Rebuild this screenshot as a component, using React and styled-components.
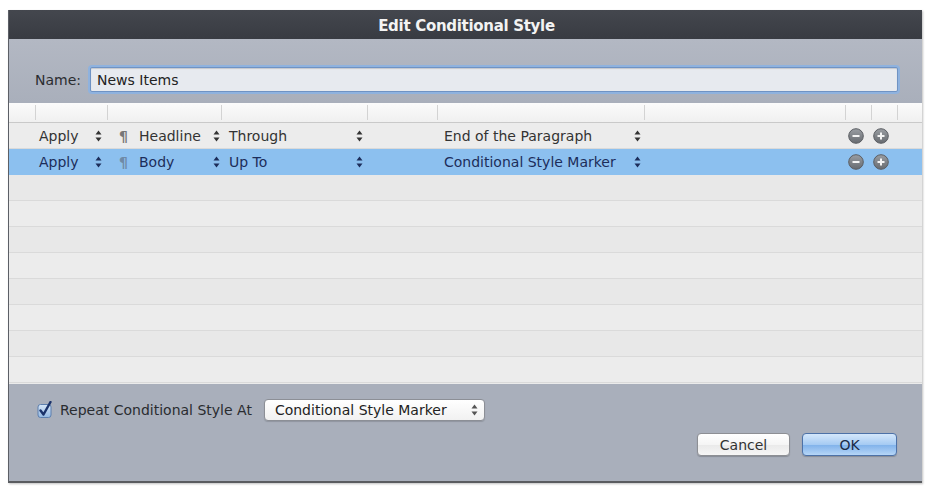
import React from "react";
import styled, { createGlobalStyle } from "styled-components";

const GlobalStyle = createGlobalStyle`
  html, body { margin: 0; padding: 0; background: #ffffff; }
  body { font-family: "DejaVu Sans", "Liberation Sans", sans-serif; }
  * { box-sizing: border-box; }
`;

const COLS = "27px 72px 114px 146px 70px 207px 201px 26px 26px 25px";

const Page = styled.div`
  padding: 10px 0 0 8px;
  width: 929px;
  height: 487px;
`;

const Dialog = styled.div`
  width: 914px;
  height: 473px;
  display: flex;
  flex-direction: column;
  background: #aab0bc;
  border-left: 1px solid #5c5f66;
  border-bottom: 2px solid #5a5c60;
  box-shadow: 1px 1px 2px rgba(0, 0, 0, 0.25);
`;

const TitleBar = styled.div`
  height: 29px;
  flex: none;
  background: linear-gradient(#44474e, #383b42);
  color: #f3f3f3;
  font-family: "DejaVu Sans", sans-serif;
  font-weight: bold;
  font-size: 15px;
  letter-spacing: -0.3px;
  display: flex;
  align-items: center;
  justify-content: center;
  padding: 3px 0 0 2px;
`;

const NameRow = styled.div`
  height: 64px;
  flex: none;
  display: flex;
  align-items: center;
  padding: 27px 0 10px 26px;
  gap: 9px;
  background: linear-gradient(#b3b8c3, #a9afbb);
`;

const Label = styled.span`
  font-size: 14px;
  color: #2a2c30;
  width: 46px;
`;

const NameInput = styled.div`
  width: 808px;
  height: 25px;
  background: #e7eaef;
  border: 1px solid #6f93c4;
  box-shadow: 0 0 0 2px #8fb2de, inset 0 1px 1px rgba(0,0,0,0.15);
  border-radius: 2px;
  display: flex;
  align-items: center;
  padding-left: 6px;
  font-size: 14px;
  color: #222;
`;

const Table = styled.div`
  height: 281px;
  flex: none;
  display: flex;
  flex-direction: column;
  background: #ebebeb;
  overflow: hidden;
`;

const Header = styled.div`
  height: 20px;
  flex: none;
  display: grid;
  grid-template-columns: ${COLS};
  background: linear-gradient(#fbfbfb, #f0f0f0);
  border-bottom: 1px solid #c9c9c9;
`;

const HeaderCell = styled.div`
  border-right: 1px solid ${(p) => (p.$last ? "transparent" : "#d3d3d3")};
  margin: 2px 0;
`;

const Row = styled.div`
  height: 26px;
  flex: none;
  display: grid;
  grid-template-columns: ${COLS};
  background: ${(p) => (p.$selected ? "#8cc0ef" : p.$alt ? "#e8e8e8" : "#ececec")};
  border-bottom: 1px solid ${(p) => (p.$selected ? "#8cc0ef" : "#dadada")};
  color: ${(p) => (p.$selected ? "#1c2d5a" : "#333333")};
  font-size: 14px;
`;

const Cell = styled.div`
  display: flex;
  align-items: center;
  justify-content: ${(p) => p.$justify || "space-between"};
  padding: ${(p) => p.$pad || "0"};
  white-space: nowrap;
  overflow: hidden;
`;

const Group = styled.span`
  display: flex;
  align-items: center;
`;

const Pilcrow = styled.span`
  color: ${(p) => (p.$selected ? "#6f8aa6" : "#777")};
  font-size: 14px;
  font-weight: bold;
  width: 20px;
`;

const Footer = styled.div`
  flex: 1;
  display: flex;
  flex-direction: column;
  padding: 15px 25px 0 28px;
  background: #a9afbb;
`;

const OptionRow = styled.div`
  display: flex;
  align-items: center;
  height: 22px;
`;

const CheckLabel = styled.span`
  font-size: 14px;
  color: #2a2c30;
  margin-left: 7px;
  margin-right: 12px;
`;

const Select = styled.div`
  width: 221px;
  height: 22px;
  border: 1px solid #8c8f96;
  border-radius: 4px;
  background: linear-gradient(#ffffff, #f1f1f1);
  box-shadow: 0 1px 1px rgba(0,0,0,0.15);
  display: flex;
  align-items: center;
  justify-content: space-between;
  padding: 0 6px 0 10px;
  font-size: 14px;
  color: #222;
`;

const Buttons = styled.div`
  display: flex;
  justify-content: flex-end;
  gap: 12px;
  margin-top: 12px;
`;

const Button = styled.div`
  width: ${(p) => p.$w}px;
  height: 23px;
  border-radius: 4px;
  display: flex;
  align-items: center;
  justify-content: center;
  font-size: 14px;
  color: ${(p) => (p.$primary ? "#1b2a48" : "#333")};
  border: 1px solid ${(p) => (p.$primary ? "#4d72a8" : "#8d8f94")};
  background: ${(p) =>
    p.$primary
      ? "linear-gradient(#d4e7fb, #a6cbf3 50%, #7fb1ea 51%, #b6d6f7)"
      : "linear-gradient(#ffffff, #f5f5f5 50%, #e9e9e9 51%, #f6f6f6)"};
  box-shadow: 0 1px 1px rgba(0,0,0,0.2);
`;

const Stepper = ({ color = "currentColor" }) => (
  <svg width="7" height="12" viewBox="0 0 7 12">
    <path d="M3.5 0.5 L6.5 4.5 L0.5 4.5 Z" fill={color} />
    <path d="M3.5 11.5 L6.5 7.5 L0.5 7.5 Z" fill={color} />
  </svg>
);

const RoundButton = ({ plus }) => (
  <svg width="16" height="16" viewBox="0 0 16 16">
    <defs>
      <linearGradient id={plus ? "gp" : "gm"} x1="0" y1="0" x2="0" y2="1">
        <stop offset="0" stopColor="#9a9ea3" />
        <stop offset="1" stopColor="#676b70" />
      </linearGradient>
    </defs>
    <circle cx="8" cy="8" r="7.3" fill={`url(#${plus ? "gp" : "gm"})`} stroke="#5b5e63" strokeWidth="1" />
    <rect x="4.5" y="7" width="7" height="2" fill="#f4f4f4" />
    {plus && <rect x="7" y="4.5" width="2" height="7" fill="#f4f4f4" />}
  </svg>
);

const CheckBox = () => (
  <svg width="16" height="18" viewBox="0 0 16 18">
    <defs>
      <linearGradient id="cb" x1="0" y1="0" x2="0" y2="1">
        <stop offset="0" stopColor="#d6e6f7" />
        <stop offset="1" stopColor="#93b8e2" />
      </linearGradient>
    </defs>
    <rect x="1" y="3.5" width="13" height="13" rx="2.5" fill="url(#cb)" stroke="#5d7fae" />
    <path d="M3.5 9.5 L6.5 13.5 L13.5 1" fill="none" stroke="#1b336b" strokeWidth="2.4" strokeLinecap="round" strokeLinejoin="round" />
  </svg>
);

const rows = [
  { style: "Headline", range: "Through", end: "End of the Paragraph" },
  { style: "Body", range: "Up To", end: "Conditional Style Marker", selected: true },
];

function DataRow({ r, alt }) {
  const sel = !!r.selected;
  return (
    <Row $selected={sel} $alt={alt}>
      <Cell />
      <Cell $pad="0 6px 0 3px">
        <span>Apply</span>
        <Stepper />
      </Cell>
      <Cell $pad="0 2px 0 11px">
        <Group>
          <Pilcrow $selected={sel}>¶</Pilcrow>
          <span>{r.style}</span>
        </Group>
        <Stepper />
      </Cell>
      <Cell $pad="0 5px 0 7px">
        <span>{r.range}</span>
        <Stepper />
      </Cell>
      <Cell />
      <Cell $pad="0 4px 0 6px">
        <span>{r.end}</span>
        <Stepper />
      </Cell>
      <Cell />
      <Cell $justify="flex-start" $pad="0 0 0 2px">
        <RoundButton />
      </Cell>
      <Cell $justify="flex-start" $pad="0 0 0 1px">
        <RoundButton plus />
      </Cell>
      <Cell />
    </Row>
  );
}

export default function App() {
  const headerCells = Array.from({ length: 10 });
  const empty = Array.from({ length: 8 });
  return (
    <>
      <GlobalStyle />
      <Page>
        <Dialog>
          <TitleBar>Edit Conditional Style</TitleBar>
          <NameRow>
            <Label>Name:</Label>
            <NameInput>News Items</NameInput>
          </NameRow>
          <Table>
            <Header>
              {headerCells.map((_, i) => (
                <HeaderCell key={i} $last={i === 9} />
              ))}
            </Header>
            {rows.map((r, i) => (
              <DataRow key={i} r={r} alt={false} />
            ))}
            {empty.map((_, i) => (
              <Row key={i} $alt={i % 2 === 0}>
                {headerCells.map((__, j) => (
                  <Cell key={j} />
                ))}
              </Row>
            ))}
          </Table>
          <Footer>
            <OptionRow>
              <CheckBox />
              <CheckLabel>Repeat Conditional Style At</CheckLabel>
              <Select>
                <span>Conditional Style Marker</span>
                <Stepper color="#555" />
              </Select>
            </OptionRow>
            <Buttons>
              <Button $w={93}>Cancel</Button>
              <Button $w={95} $primary>OK</Button>
            </Buttons>
          </Footer>
        </Dialog>
      </Page>
    </>
  );
}
